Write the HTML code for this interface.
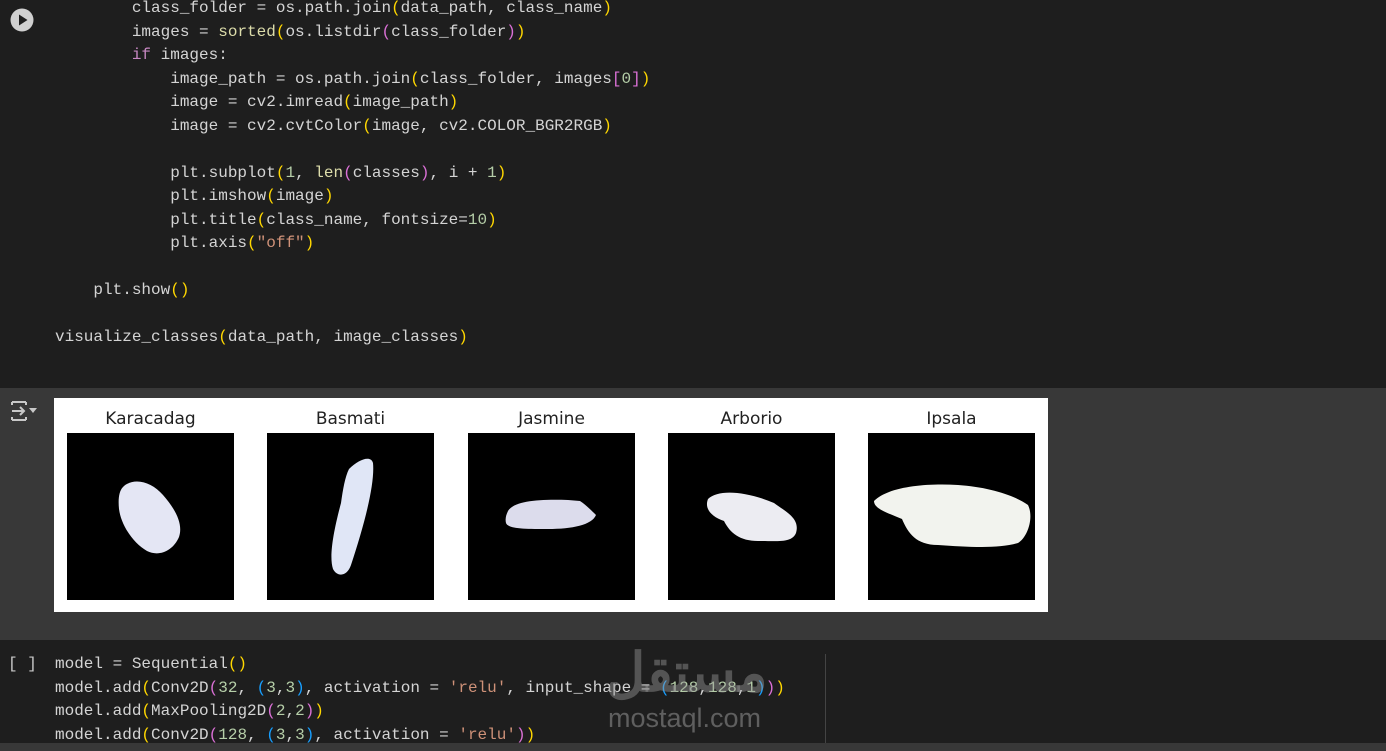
<!DOCTYPE html>
<html><head><meta charset="utf-8"><style>
html,body{margin:0;padding:0;width:1386px;height:751px;overflow:hidden;background:#1e1e1e;font-family:"Liberation Mono",monospace;}
.code{position:absolute;left:0;font-size:16px;line-height:23.5px;color:#d4d4d4;white-space:pre;}
.y{color:#ffd700}.p{color:#da70d6}.b{color:#179fff}.k{color:#c586c0}.f{color:#dcdcaa}.s{color:#ce9178}.n{color:#b5cea8}
#out{position:absolute;left:0;top:388px;width:1386px;height:252px;background:#383838;}
#fig{position:absolute;left:54px;top:10px;width:994px;height:214px;background:#fff;}
.t{position:absolute;top:11px;width:167px;text-align:center;font-family:"DejaVu Sans","Liberation Sans",sans-serif;font-size:17px;color:#222;}
.im{position:absolute;top:35px;width:167px;height:167px;background:#000;}
#cell2{position:absolute;left:0;top:641px;width:1386px;height:102px;background:#1e1e1e;}
</style></head><body>
<svg style="position:absolute;left:10px;top:8px" width="24" height="24" viewBox="0 0 24 24"><circle cx="12" cy="12" r="11.5" fill="#d0d0d0"/><path d="M9 6.5L17.5 12L9 17.5Z" fill="#1e1e1e"/></svg>
<div class="code" style="top:-3px;left:55px">        class_folder = os.path.join<span class="y">(</span>data_path, class_name<span class="y">)</span>
        images = <span class="f">sorted</span><span class="y">(</span>os.listdir<span class="p">(</span>class_folder<span class="p">)</span><span class="y">)</span>
        <span class="k">if</span> images:
            image_path = os.path.join<span class="y">(</span>class_folder, images<span class="p">[</span><span class="n">0</span><span class="p">]</span><span class="y">)</span>
            image = cv2.imread<span class="y">(</span>image_path<span class="y">)</span>
            image = cv2.cvtColor<span class="y">(</span>image, cv2.COLOR_BGR2RGB<span class="y">)</span>

            plt.subplot<span class="y">(</span><span class="n">1</span>, <span class="f">len</span><span class="p">(</span>classes<span class="p">)</span>, i + <span class="n">1</span><span class="y">)</span>
            plt.imshow<span class="y">(</span>image<span class="y">)</span>
            plt.title<span class="y">(</span>class_name, fontsize=<span class="n">10</span><span class="y">)</span>
            plt.axis<span class="y">(</span><span class="s">"off"</span><span class="y">)</span>

    plt.show<span class="y">()</span>

visualize_classes<span class="y">(</span>data_path, image_classes<span class="y">)</span></div>
<div id="out">
<svg style="position:absolute;left:10px;top:12px" width="28" height="22" viewBox="0 0 28 22"><path d="M2 2h14M2 20h14M2 2v3M16 2v3M2 20v-3M16 20v-3M2 11h12M10 7l4 4-4 4" stroke="#c8c8c8" stroke-width="2" fill="none"/><path d="M19 8h8l-4 5z" fill="#c8c8c8"/></svg>
<div id="fig">
<div class="t" style="left:13px">Karacadag</div><div class="t" style="left:213px">Basmati</div><div class="t" style="left:414px">Jasmine</div><div class="t" style="left:614px">Arborio</div><div class="t" style="left:814px">Ipsala</div>
<svg class="im" style="left:13px" viewBox="0 0 167 167"><path d="M56 54C66 44 84 48 96 62C110 78 116 92 112 104C106 118 92 124 80 118C66 110 54 92 52 76C51 66 52 58 56 54Z" fill="#e4e6f4"/></svg>
<svg class="im" style="left:213px" viewBox="0 0 167 167"><path d="M82 36C92 26 104 22 106 30C108 50 98 90 84 132C80 144 70 144 66 136C62 124 66 100 74 70C76 56 78 44 82 36Z" fill="#e0e6f6"/></svg>
<svg class="im" style="left:414px" viewBox="0 0 167 167"><path d="M40 78C46 68 70 66 100 67L112 68C118 72 124 78 128 82C124 92 104 96 80 96C58 96 40 96 38 90C37 86 38 82 40 78Z" fill="#dcdcec"/></svg>
<svg class="im" style="left:614px" viewBox="0 0 167 167"><path d="M40 66C50 56 78 58 106 70C120 80 132 86 128 100C124 110 110 108 90 108C72 108 62 100 56 88C44 84 36 76 40 66Z" fill="#ececf2"/></svg>
<svg class="im" style="left:814px" viewBox="0 0 167 167"><path d="M6 68C20 54 56 50 90 52C120 54 146 62 160 72C166 84 160 104 150 110C130 116 100 114 70 112C48 112 40 100 34 86C20 80 6 76 6 68Z" fill="#f2f3ee"/></svg>
</div>
</div>
<div id="cell2">
<div class="code" style="top:12px;left:8px;color:#c8c8c8">[ ]</div>
<div class="code" style="top:12px;left:55px">model = Sequential<span class="y">()</span>
model.add<span class="y">(</span>Conv2D<span class="p">(</span><span class="n">32</span>, <span class="b">(</span><span class="n">3</span>,<span class="n">3</span><span class="b">)</span>, activation = <span class="s">'relu'</span>, input_shape = <span class="b">(</span><span class="n">128</span>,<span class="n">128</span>,<span class="n">1</span><span class="b">)</span><span class="p">)</span><span class="y">)</span>
model.add<span class="y">(</span>MaxPooling2D<span class="p">(</span><span class="n">2</span>,<span class="n">2</span><span class="p">)</span><span class="y">)</span>
model.add<span class="y">(</span>Conv2D<span class="p">(</span><span class="n">128</span>, <span class="b">(</span><span class="n">3</span>,<span class="n">3</span><span class="b">)</span>, activation = <span class="s">'relu'</span><span class="p">)</span><span class="y">)</span></div>
<div style="position:absolute;left:825px;top:13px;width:1px;height:89px;background:#444"></div>
<div style="position:absolute;left:608px;top:62px;font-family:'Liberation Sans',sans-serif;font-size:27px;color:rgba(150,150,150,0.55)">mostaql.com</div>
<div style="position:absolute;left:606px;top:0px;font-family:'Liberation Sans','Noto Sans CJK SC',sans-serif;font-size:54px;line-height:64px;font-weight:bold;color:rgba(150,150,150,0.45)">مستقل</div>
</div>
<div style="position:absolute;left:0;top:743px;width:1386px;height:8px;background:#383838"></div>
</body></html>
